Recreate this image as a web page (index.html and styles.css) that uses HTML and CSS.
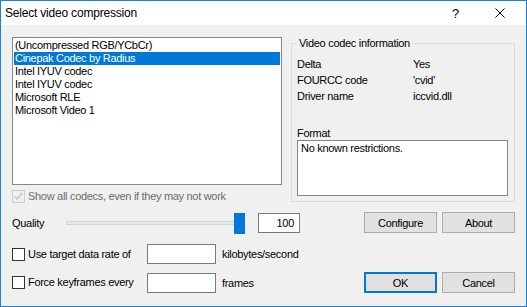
FILE: index.html
```html
<!doctype html>
<html lang="en">
  <head>
    <meta charset="UTF-8" />
    <title>Select video compression</title>
    <link rel="stylesheet" href="styles.css">
  </head>
  <body>
    <div class="dialog">
      <div class="titlebar">
        <span class="title">Select video compression</span>
        <span class="help">?</span>
        <svg class="close" width="10" height="10" viewBox="0 0 10 10">
          <path d="M0.5 0.5 L9.5 9.5 M9.5 0.5 L0.5 9.5" stroke="#000" stroke-width="1" />
        </svg>
      </div>

      <div class="content">
        <div class="top">
          <div class="left">
            <ul class="codec-list">
              <li>(Uncompressed RGB/YCbCr)</li>
              <li class="selected">Cinepak Codec by Radius</li>
              <li>Intel IYUV codec</li>
              <li>Intel IYUV codec</li>
              <li>Microsoft RLE</li>
              <li>Microsoft Video 1</li>
            </ul>
            <label class="check disabled">
              <span class="box">
                <svg width="11" height="11" viewBox="0 0 11 11">
                  <path d="M1.5 5.5 L4 8 L9.5 2" fill="none" stroke="#c4c4c4" stroke-width="1.4" />
                </svg>
              </span>
              Show all codecs, even if they may not work
            </label>
          </div>

          <div class="group">
            <div class="group-title">Video codec information</div>
            <dl class="info">
              <div class="info-row"><dt>Delta</dt><dd>Yes</dd></div>
              <div class="info-row"><dt>FOURCC code</dt><dd>'cvid'</dd></div>
              <div class="info-row"><dt>Driver name</dt><dd>iccvid.dll</dd></div>
            </dl>
            <div class="format-label">Format</div>
            <div class="format-box">No known restrictions.</div>
          </div>
        </div>

        <div class="row quality-row">
          <span class="quality-label">Quality</span>
          <div class="slider">
            <div class="track"></div>
            <div class="thumb"></div>
          </div>
          <div class="edit num">100</div>
          <div class="buttons">
            <button>Configure</button>
            <button>About</button>
          </div>
        </div>

        <div class="row rate-row">
          <label class="check wide"><span class="box"></span>Use target data rate of</label>
          <div class="edit field"></div>
          <span class="unit">kilobytes/second</span>
        </div>

        <div class="row key-row">
          <label class="check wide"><span class="box"></span>Force keyframes every</label>
          <div class="edit field"></div>
          <span class="unit">frames</span>
          <div class="buttons">
            <button class="default">OK</button>
            <button>Cancel</button>
          </div>
        </div>
      </div>
    </div>
  </body>
</html>
```

FILE: styles.css
```css
body {
  margin: 0;
}

.dialog {
  width: 527px;
  height: 307px;
  box-sizing: border-box;
  border: 1px solid #1883d7;
  background-color: #f0f0f0;
  font-family: "Liberation Sans", Arial, sans-serif;
  font-size: 11px;
  letter-spacing: -0.3px;
  color: #000;
  overflow: hidden;
}

.titlebar {
  display: flex;
  align-items: center;
  height: 24px;
  padding-left: 4px;
  background-color: #fff;
  font-size: 12px;
  letter-spacing: -0.2px;
}

.title {
  flex: 1;
}

.help {
  font-size: 13px;
  margin-right: 36px;
}

.close {
  margin-right: 21px;
}

.content {
  padding: 12px 11px 0 11px;
}

.top {
  display: flex;
  align-items: flex-start;
}

.codec-list {
  width: 270px;
  height: 148px;
  box-sizing: border-box;
  margin: 0;
  padding: 1px;
  list-style: none;
  border: 1px solid #828790;
  background-color: #fff;
}

.codec-list li {
  height: 13px;
  line-height: 13px;
  padding-left: 1px;
}

.codec-list .selected {
  background-color: #0078d7;
  color: #fff;
}

.check {
  display: flex;
  align-items: center;
  gap: 3px;
  line-height: 13px;
}

.box {
  display: flex;
  align-items: center;
  justify-content: center;
  width: 13px;
  height: 13px;
  box-sizing: border-box;
  border: 1px solid #333;
  background-color: #fff;
  flex-shrink: 0;
}

.check.disabled {
  margin-top: 5px;
  color: #6d6d6d;
}

.check.disabled .box {
  border-color: #cccccc;
  background-color: #f0f0f0;
}

.check.wide {
  width: 135px;
  flex-shrink: 0;
}

.group {
  width: 225px;
  height: 159px;
  box-sizing: border-box;
  margin: 6px 0 0 9px;
  padding: 0 5px;
  border: 1px solid #dcdcdc;
}

.group-title {
  width: max-content;
  margin-top: -7px;
  padding: 0 2px;
  line-height: 13px;
  background-color: #f0f0f0;
}

.info {
  margin: 6px 0 0;
}

.info-row {
  display: flex;
  height: 16px;
  line-height: 16px;
}

.info dt {
  width: 116px;
}

.info dd {
  margin: 0;
}

.format-label {
  margin-top: 23px;
  line-height: 13px;
}

.format-box {
  width: 211px;
  height: 56px;
  box-sizing: border-box;
  padding: 1px 3px;
  line-height: 13px;
  border: 1px solid #828790;
  background-color: #fff;
}

.row {
  display: flex;
  align-items: center;
}

.quality-row {
  height: 21px;
  margin-top: 9px;
}

.rate-row {
  height: 20px;
  margin-top: 11px;
}

.key-row {
  height: 21px;
  margin-top: 8px;
}

.key-row .field {
  align-self: flex-end;
}

.quality-label {
  width: 54px;
  flex-shrink: 0;
}

.slider {
  position: relative;
  display: flex;
  align-items: center;
  width: 179px;
  height: 21px;
}

.track {
  width: 100%;
  height: 4px;
  box-sizing: border-box;
  border: 1px solid #d6d6d6;
  background-color: #e7eaea;
}

.thumb {
  position: absolute;
  right: 0;
  top: 1px;
  width: 11px;
  height: 21px;
  background-color: #0078d7;
}

.edit {
  height: 20px;
  box-sizing: border-box;
  border: 1px solid #7a7a7a;
  background-color: #fff;
  line-height: 18px;
}

.num {
  width: 42px;
  margin-left: 13px;
  padding-right: 5px;
  text-align: right;
}

.field {
  width: 69px;
}

.unit {
  margin-left: 6px;
}

.buttons {
  display: flex;
  gap: 5px;
  margin-left: auto;
}

button {
  width: 73px;
  height: 21px;
  box-sizing: border-box;
  padding: 0;
  border: 1px solid #adadad;
  background-color: #e1e1e1;
  font: inherit;
  letter-spacing: inherit;
  color: #000;
}

button.default {
  border: 2px solid #0078d7;
}
```
